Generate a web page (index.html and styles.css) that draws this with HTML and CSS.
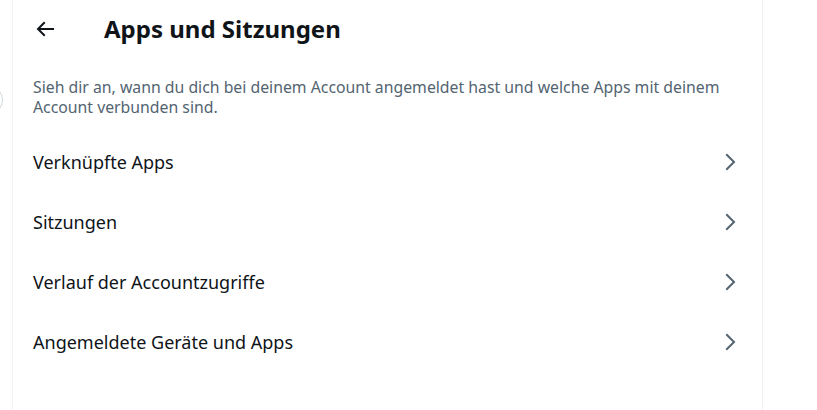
FILE: index.html
```html
<!DOCTYPE html>
<html lang="de">
<head>
<meta charset="utf-8">
<title>Apps und Sitzungen</title>
<link rel="stylesheet" href="styles.css">
</head>
<body>
<div class="page">
  <span class="edge-ring"></span>
  <main class="column">
    <header class="header">
      <button class="back" aria-label="Zurück">
        <svg viewBox="0 0 24 24" width="24" height="24"><path d="M7.414 13l5.043 5.04-1.414 1.42L3.586 12l7.457-7.46 1.414 1.42L7.414 11H21v2H7.414z"/></svg>
      </button>
      <h1 class="title">Apps und Sitzungen</h1>
    </header>
    <p class="desc">Sieh dir an, wann du dich bei deinem Account angemeldet hast und welche Apps mit deinem Account verbunden sind.</p>
    <nav class="list">
      <a class="row" href="#"><span>Verknüpfte Apps</span><svg class="chev" viewBox="0 0 24 24"><path d="M14.586 12L7.543 4.96l1.414-1.42L17.414 12l-8.457 8.46-1.414-1.42L14.586 12z"/></svg></a>
      <a class="row" href="#"><span>Sitzungen</span><svg class="chev" viewBox="0 0 24 24"><path d="M14.586 12L7.543 4.96l1.414-1.42L17.414 12l-8.457 8.46-1.414-1.42L14.586 12z"/></svg></a>
      <a class="row" href="#"><span>Verlauf der Accountzugriffe</span><svg class="chev" viewBox="0 0 24 24"><path d="M14.586 12L7.543 4.96l1.414-1.42L17.414 12l-8.457 8.46-1.414-1.42L14.586 12z"/></svg></a>
      <a class="row" href="#"><span>Angemeldete Geräte und Apps</span><svg class="chev" viewBox="0 0 24 24"><path d="M14.586 12L7.543 4.96l1.414-1.42L17.414 12l-8.457 8.46-1.414-1.42L14.586 12z"/></svg></a>
    </nav>
  </main>
</div>
</body>
</html>
```
FILE: styles.css
```css
* { box-sizing: border-box; }
html, body { margin: 0; padding: 0; background: #fff; }
body {
  font-family: "Noto Sans", "Open Sans", Arial, sans-serif;
  color: #0f1419;
  overflow: hidden;
}
.page {
  position: relative;
  height: 410px;
  padding-left: 12px;
}
.edge-ring {
  position: absolute;
  left: -17px;
  top: 88px;
  width: 20px;
  height: 24px;
  border: 1px solid #cfd9de;
  border-radius: 50%;
}
.column {
  width: 751px;
  height: 410px;
  border-left: 1px solid #eff3f4;
  border-right: 1px solid #eff3f4;
}
.header {
  height: 53px;
  display: flex;
  align-items: center;
  padding: 5px 0 0 20px;
}
.back {
  width: 24px;
  height: 24px;
  padding: 0;
  border: 0;
  background: none;
  display: flex;
  margin-right: 47px;
}
.back svg { fill: #0f1419; }
.title {
  margin: 0;
  font-size: 24px;
  font-weight: 700;
  line-height: 28px;
}
.desc {
  margin: 0;
  padding: 24px 20px 15px 20px;
  font-size: 15.8px;
  line-height: 20px;
  color: #536471;
}
.list { display: flex; flex-direction: column; }
.row {
  height: 60px;
  display: flex;
  align-items: center;
  justify-content: space-between;
  padding: 0 20px 0 20px;
  text-decoration: none;
  color: #0f1419;
  font-size: 18px;
}
.chev {
  width: 24px;
  height: 24px;
  fill: #536471;
}
```
